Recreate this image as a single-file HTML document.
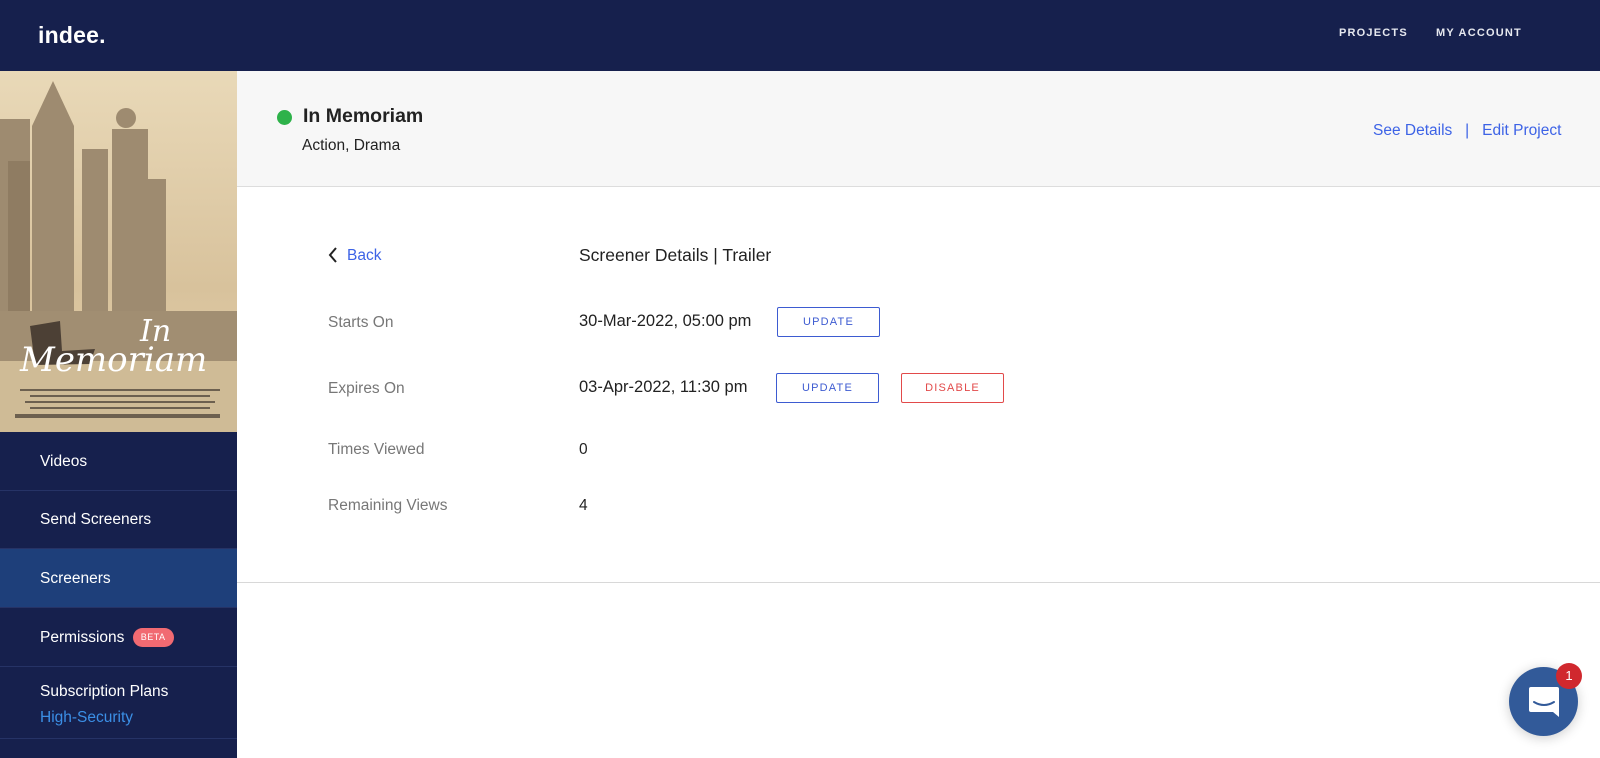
<!DOCTYPE html>
<html><head><meta charset="utf-8"><style>
*{margin:0;padding:0;box-sizing:border-box}
body{width:1600px;height:758px;overflow:hidden;font-family:"Liberation Sans",sans-serif;background:#fff;position:relative}
.top{position:absolute;left:0;top:0;width:1600px;height:71px;background:#16204d}
.logo{position:absolute;left:38px;top:22px;color:#fff;font-size:23px;font-weight:bold;letter-spacing:0.2px}
.nav{position:absolute;top:27px;color:#e6e8ef;font-size:11px;font-weight:bold;letter-spacing:1.2px}
.side{position:absolute;left:0;top:71px;width:237px;height:687px;background:#16204d}
.poster{position:absolute;left:0;top:0;width:237px;height:361px;overflow:hidden}
.item{position:absolute;left:0;width:237px;border-bottom:1px solid #263366;color:#fff;font-size:15.5px;padding-left:40px}
.head{position:absolute;left:237px;top:71px;width:1363px;height:116px;background:#f7f7f7;border-bottom:1px solid #ddd}
.lbl{position:absolute;left:328px;color:#777;font-size:15.5px}
.val{position:absolute;left:579px;color:#222;font-size:15.5px}
.btn{position:absolute;height:30px;border:1px solid #3d5bd1;color:#3d5bd1;font-size:11px;letter-spacing:1.2px;text-align:center;line-height:28px;border-radius:2px}
</style></head><body>
<div class="top">
<div class="logo">indee.</div>
<div class="nav" style="left:1339px">PROJECTS</div>
<div class="nav" style="left:1436px">MY ACCOUNT</div>
</div>
<div class="side">
<div class="poster">
<svg width="237" height="361" viewBox="0 0 237 361">
<defs><linearGradient id="g" x1="0" y1="0" x2="0" y2="1"><stop offset="0" stop-color="#e9d9b8"/><stop offset="0.6" stop-color="#d8c29c"/><stop offset="1" stop-color="#e6d2ad"/></linearGradient></defs>
<rect width="237" height="361" fill="url(#g)"/>
<path d="M167 270 Q200 248 237 258 L237 292 L167 292Z" fill="#b8a384"/>
<g fill="#9e8b70">
<rect x="0" y="48" width="30" height="240"/>
<rect x="32" y="55" width="42" height="235"/>
<path d="M32 55 L53 10 L74 55Z"/>
<rect x="82" y="78" width="26" height="210"/>
<rect x="112" y="58" width="36" height="235"/>
<circle cx="126" cy="47" r="10"/>
<rect x="144" y="108" width="22" height="180"/>
<rect x="8" y="90" width="22" height="200" fill="#8f7c62"/>
</g>
<rect x="0" y="240" width="237" height="50" fill="#a18e72"/>
<rect x="0" y="290" width="237" height="71" fill="#cfbb96"/>
<path d="M30 255 L60 250 L62 280 L95 278 L90 293 L35 294Z" fill="#4c4035"/>
<text x="20" y="300" font-family="DejaVu Serif,serif" font-style="italic" font-size="34" fill="#fff">Memoriam</text>
<text x="140" y="270" font-family="DejaVu Serif,serif" font-style="italic" font-size="30" fill="#fff">In</text>
<g fill="#6d604f"><rect x="20" y="318" width="200" height="2"/><rect x="30" y="324" width="180" height="2"/><rect x="25" y="330" width="190" height="2"/><rect x="30" y="336" width="180" height="2"/><rect x="15" y="343" width="205" height="4"/></g>
</svg>
</div>
<div class="item" style="top:361px;height:59px;line-height:59px">Videos</div>
<div class="item" style="top:420px;height:58px;line-height:58px">Send Screeners</div>
<div class="item" style="top:478px;height:59px;line-height:59px;background:#1e3f7a">Screeners</div>
<div class="item" style="top:537px;height:59px;line-height:59px">Permissions <span style="display:inline-block;background:#f16a72;color:#fff;font-size:9px;line-height:19px;height:19px;padding:0 8px;border-radius:10px;vertical-align:middle;margin-left:4px;letter-spacing:0.5px">BETA</span></div>
<div class="item" style="top:596px;height:72px;padding-top:12px;line-height:26px">Subscription Plans<br><span style="color:#3b8fe6">High-Security</span></div>
</div>
<div class="head">
<div style="position:absolute;left:40px;top:39px;width:15px;height:15px;border-radius:50%;background:#2eb24a"></div>
<div style="position:absolute;left:66px;top:34px;font-size:19.5px;font-weight:bold;color:#222">In Memoriam</div>
<div style="position:absolute;left:65px;top:66px;font-size:15.5px;color:#222">Action, Drama</div>
<div style="position:absolute;left:1136px;top:51px;font-size:15.5px;color:#3d63e6">See Details &nbsp;&nbsp;| &nbsp;&nbsp;Edit Project</div>
</div>
<svg style="position:absolute;left:327px;top:246px" width="12" height="18" viewBox="0 0 12 18"><path d="M9 2 L3 9 L9 16" fill="none" stroke="#222" stroke-width="2"/></svg>
<div style="position:absolute;left:347px;top:247px;font-size:15.5px;color:#3d63e6">Back</div>
<div class="val" style="top:245px;font-size:17.5px">Screener Details | Trailer</div>
<div class="lbl" style="top:314px">Starts On</div>
<div class="val" style="top:312px;font-size:16.5px">30-Mar-2022, 05:00 pm</div>
<div class="btn" style="left:777px;top:307px;width:103px">UPDATE</div>
<div class="lbl" style="top:380px">Expires On</div>
<div class="val" style="top:378px;font-size:16.5px">03-Apr-2022, 11:30 pm</div>
<div class="btn" style="left:776px;top:373px;width:103px">UPDATE</div>
<div class="btn" style="left:901px;top:373px;width:103px;border-color:#e24a4a;color:#e24a4a">DISABLE</div>
<div class="lbl" style="top:441px">Times Viewed</div>
<div class="val" style="top:441px">0</div>
<div class="lbl" style="top:497px">Remaining Views</div>
<div class="val" style="top:497px">4</div>
<div style="position:absolute;left:237px;top:582px;width:1363px;height:1px;background:#d8d8d8"></div>
<div style="position:absolute;left:1509px;top:667px;width:69px;height:69px;border-radius:50%;background:#325a99;box-shadow:0 2px 12px rgba(0,0,0,0.2)"></div>
<svg style="position:absolute;left:1526px;top:684px" width="36" height="36" viewBox="0 0 36 36"><path d="M5 3 H31 Q33 3 33 5 V33 L27 28 H5 Q3 28 3 26 V5 Q3 3 5 3Z" fill="#fff"/><path d="M8 18 Q18 24 28 18" fill="none" stroke="#325a99" stroke-width="2" stroke-linecap="round"/></svg>
<div style="position:absolute;left:1556px;top:663px;width:26px;height:26px;border-radius:50%;background:#d0282e;color:#fff;font-size:13px;text-align:center;line-height:26px">1</div>
</body></html>
